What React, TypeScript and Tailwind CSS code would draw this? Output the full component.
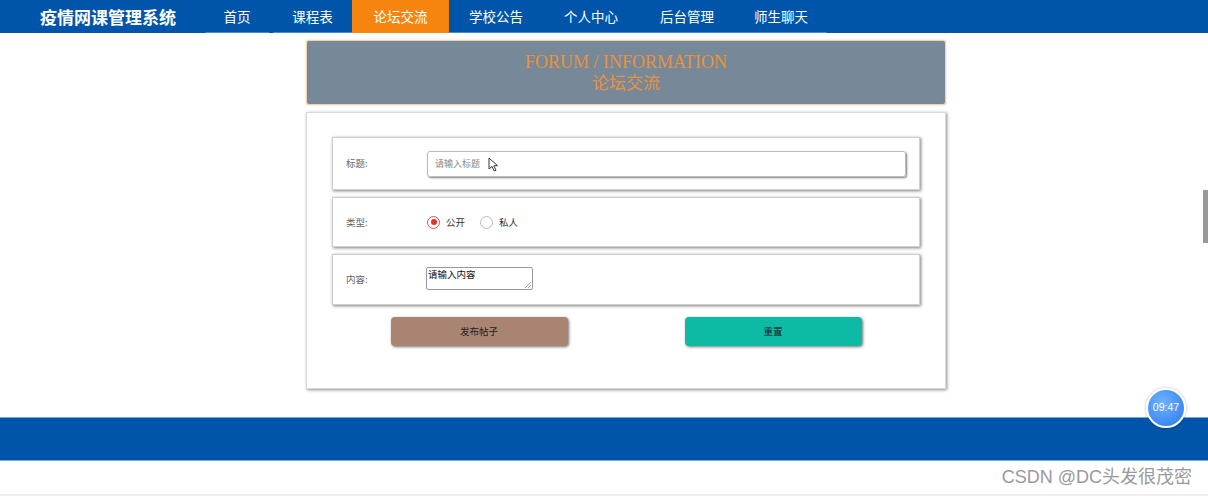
import React from "react";

const navItems = [
  { t: "首页", w: "w-[64px]", active: false },
  { t: "课程表", w: "w-[79px]", active: false },
  { t: "论坛交流", w: "w-[97px]", active: true },
  { t: "学校公告", w: "w-[94px]", active: false },
  { t: "个人中心", w: "w-[96px]", active: false },
  { t: "后台管理", w: "w-[96px]", active: false },
  { t: "师生聊天", w: "w-[92px]", active: false },
];

export default function App() {
  return (
    <div
      className="relative w-[1208px] h-[496px] bg-white overflow-hidden"
      style={{ fontFamily: '"Noto Sans CJK SC", "Liberation Sans", sans-serif' }}
    >
      {/* nav */}
      <div className="h-[33px] bg-[#0055aa] flex items-stretch">
        <div className="w-[205px] flex items-center pl-[40px] text-white text-[17px] font-semibold whitespace-nowrap">
          疫情网课管理系统
        </div>
        {navItems.map((n, i) => (
          <div
            key={i}
            className={`${n.w} flex items-center justify-center text-[13.5px] whitespace-nowrap ${
              n.active
                ? "bg-[#f5850f] text-white"
                : "text-white border-b-[1px] border-[#4f86c6]"
            } ${i === 0 ? "mr-[4px]" : ""}`}
          >
            {n.t}
          </div>
        ))}
      </div>

      {/* main */}
      <div className="w-[640px] ml-[306px] mt-[7px]">
        <div className="h-[65px] bg-[#778899] border border-[#f3d4b0] rounded-[3px] flex flex-col items-center justify-center shadow-[0_0_2px_rgba(240,180,120,0.7)]">
          <div
            className="text-[#e8933a] text-[18px] leading-[22px]"
            style={{ fontFamily: '"Liberation Serif", "Noto Sans CJK SC", serif' }}
          >
            FORUM / INFORMATION
          </div>
          <div
            className="text-[#e8933a] text-[17px] leading-[22px]"
            style={{ fontFamily: '"Liberation Serif", "Noto Sans CJK SC", serif' }}
          >
            论坛交流
          </div>
        </div>

        <div className="mt-[7px] h-[277px] bg-white border border-[#d8d8d8] shadow-[1px_1px_3px_rgba(0,0,0,0.45)] px-[25px] pt-[24px]">
          {/* row 1 */}
          <div className="h-[53px] flex items-center px-[13px] border border-[#cfcfcf] shadow-[1px_1px_3px_rgba(0,0,0,0.5)]">
            <div className="w-[81px] text-[9.5px] text-[#666]">标题:</div>
            <div className="flex-1 h-[26px] border border-[#bbb] rounded-[3px] shadow-[1px_1px_2px_rgba(0,0,0,0.5)] flex items-center pl-[7px]">
              <span className="text-[9px] text-[#888]">请输入标题</span>
              <svg width="11" height="15" viewBox="0 0 11 15" className="ml-[8px] mt-[2px]">
                <path d="M1 1 L1 12 L4 9.5 L6.2 14 L8 13.2 L5.8 8.8 L9.5 8.6 Z" fill="white" stroke="#333" strokeWidth="1" strokeLinejoin="round" />
              </svg>
            </div>
          </div>
          {/* row 2 */}
          <div className="mt-[7px] h-[50px] flex items-center px-[13px] border border-[#cfcfcf] shadow-[1px_1px_3px_rgba(0,0,0,0.5)]">
            <div className="w-[81px] text-[9.5px] text-[#666]">类型:</div>
            <div className="flex items-center">
              <span className="w-[13px] h-[13px] rounded-full border border-[#d9534f] flex items-center justify-center">
                <span className="w-[6px] h-[6px] rounded-full bg-[#e0322b]" />
              </span>
              <span className="ml-[6px] text-[9.5px] text-[#333]">公开</span>
              <span className="ml-[15px] w-[13px] h-[13px] rounded-full border border-[#bbb]" />
              <span className="ml-[6px] text-[9.5px] text-[#333]">私人</span>
            </div>
          </div>
          {/* row 3 */}
          <div className="mt-[7px] h-[51px] flex items-center px-[13px] border border-[#cfcfcf] shadow-[1px_1px_3px_rgba(0,0,0,0.5)]">
            <div className="w-[80px] text-[9.5px] text-[#666]">内容:</div>
            <div className="relative w-[107px] h-[23px] border border-[#999] rounded-[2px] mb-[3px]">
              <span className="absolute left-[1px] top-[0px] text-[9.5px] leading-[12px] text-[#111]">请输入内容</span>
              <svg width="6" height="6" viewBox="0 0 6 6" className="absolute right-[1px] bottom-[1px]">
                <path d="M6 0 L0 6 M6 3 L3 6" stroke="#888" strokeWidth="0.8" />
              </svg>
            </div>
          </div>
          {/* buttons */}
          <div className="mt-[12px] grid grid-cols-2">
            <div className="flex justify-center">
              <div className="w-[177px] h-[29px] rounded-[4px] bg-[#a98473] shadow-[1px_1px_3px_rgba(0,0,0,0.55)] flex items-center justify-center text-[9.5px] text-[#222]">
                发布帖子
              </div>
            </div>
            <div className="flex justify-center">
              <div className="w-[177px] h-[29px] rounded-[4px] bg-[#0dbba5] shadow-[1px_1px_3px_rgba(0,0,0,0.55)] flex items-center justify-center text-[9.5px] text-[#222]">
                重置
              </div>
            </div>
          </div>
        </div>
      </div>

      {/* footer */}
      <div className="mt-[28px] h-[44px] bg-[#0054a9] border-y border-[#7aa6d6]" />

      {/* watermark */}
      <div
        className="absolute right-[16px] top-[465px] text-[18px] leading-[24px] text-[#9a9a9a]"
        style={{ fontFamily: '"Liberation Sans", "Noto Sans CJK SC", sans-serif' }}
      >
        CSDN @DC头发很茂密
      </div>
      <div className="absolute left-0 right-0 bottom-0 h-[2px] bg-[#eeeeee]" />

      {/* scrollbar thumb */}
      <div className="absolute right-0 top-[190px] w-[5px] h-[53px] bg-[#999]" />

      {/* clock */}
      <div className="absolute left-[1146px] top-[388px] w-[40px] h-[40px] rounded-full border-[2px] border-white bg-[radial-gradient(circle_at_40%_35%,#6cb4ff,#2a78ee)] shadow-[0_0_3px_rgba(0,0,0,0.3)] flex items-center justify-center">
        <span className="text-white text-[10.5px]" style={{ fontFamily: '"Liberation Sans", sans-serif' }}>
          09:47
        </span>
      </div>
    </div>
  );
}
